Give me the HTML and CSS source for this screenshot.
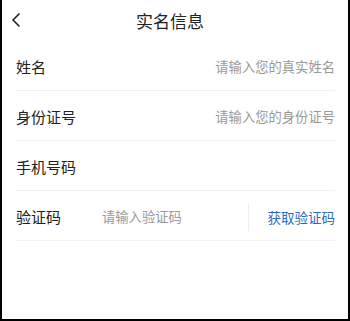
FILE: index.html
```html
<!DOCTYPE html>
<html lang="zh-CN">
<head>
<meta charset="UTF-8">
<meta name="viewport" content="width=device-width, initial-scale=1.0">
<title>实名信息</title>
<link rel="stylesheet" href="styles.css">
</head>
<body>
<div class="page">
  <div class="header">
    <span class="back">
      <svg width="10" height="16" viewBox="0 0 10 16"><path d="M8.5 1.5 L2 8 L8.5 14.5" fill="none" stroke="#222" stroke-width="1.6"/></svg>
    </span>
    <h1 class="title">实名信息</h1>
  </div>
  <div class="form">
    <div class="row">
      <span class="label">姓名</span>
      <span class="hint">请输入您的真实姓名</span>
    </div>
    <div class="row">
      <span class="label">身份证号</span>
      <span class="hint">请输入您的身份证号</span>
    </div>
    <div class="row">
      <span class="label">手机号码</span>
      <span class="hint"></span>
    </div>
    <div class="row">
      <span class="label code-label">验证码</span>
      <span class="hint code-hint">请输入验证码</span>
      <span class="sep"></span>
      <a class="get-code">获取验证码</a>
    </div>
  </div>
</div>
</body>
</html>
```

FILE: styles.css
```css
body {
  margin: 0;
  padding: 0;
  font-family: "Noto Sans CJK SC", "Noto Sans", sans-serif;
  background-color: #fff;
}

.page {
  width: 350px;
  height: 321px;
  box-sizing: border-box;
  border-left: 2px solid #000;
  border-right: 2px solid #000;
  border-bottom: 2px solid #000;
  background-color: #fff;
}

.header {
  position: relative;
  height: 41px;
  display: flex;
  align-items: center;
  justify-content: center;
}

.back {
  position: absolute;
  left: 9px;
  top: 12px;
  display: flex;
}

.title {
  margin: 0 10px 0 0;
  font-size: 17px;
  font-weight: normal;
  color: #222;
  line-height: 1;
}

.form {
  padding: 0 13px 0 14px;
}

.row {
  height: 49px;
  display: flex;
  align-items: center;
  border-bottom: 1px solid #f1f1f1;
  padding-top: 2px;
  box-sizing: content-box;
  height: 47px;
}

.label {
  font-size: 15px;
  color: #222;
}

.hint {
  margin-left: auto;
  font-size: 13.3px;
  color: #999;
}

.code-label {
  width: 86px;
}

.code-hint {
  margin-left: 0;
  flex: 1;
}

.sep {
  width: 1px;
  height: 28px;
  background-color: #eee;
  margin-right: 19px;
}

.get-code {
  font-size: 13.5px;
  color: #2d6bbf;
  cursor: pointer;
}
```
